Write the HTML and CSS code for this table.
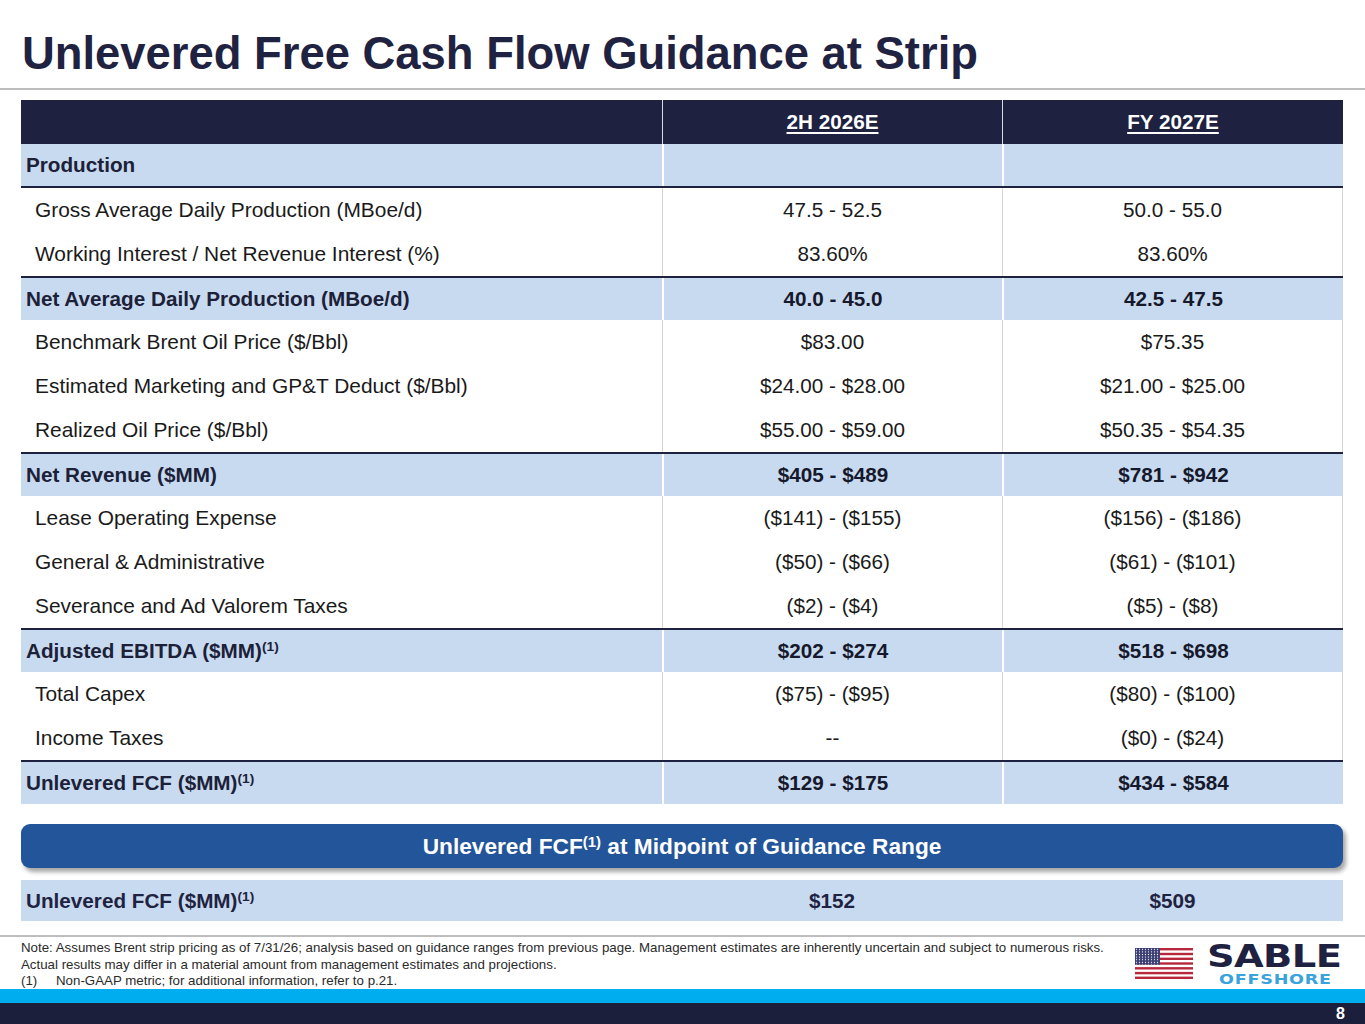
FILE: index.html
```html
<!DOCTYPE html>
<html lang="en">
<head>
<meta charset="utf-8">
<title>Unlevered Free Cash Flow Guidance at Strip</title>
<link rel="stylesheet" href="styles.css">
</head>
<body>
<h1 class="title">Unlevered Free Cash Flow Guidance at Strip</h1>
<div class="rule"></div>

<div class="table">
  <div class="row head">
    <div class="cell label"></div>
    <div class="cell val"><span class="u">2H 2026E</span></div>
    <div class="cell val"><span class="u">FY 2027E</span></div>
  </div>
  <div class="row sub first">
    <div class="cell label"><span>Production</span></div>
    <div class="cell val"></div>
    <div class="cell val"></div>
  </div>
  <div class="row plain">
    <div class="cell label"><span>Gross Average Daily Production (MBoe/d)</span></div>
    <div class="cell val">47.5 - 52.5</div>
    <div class="cell val">50.0 - 55.0</div>
  </div>
  <div class="row plain">
    <div class="cell label"><span>Working Interest / Net Revenue Interest (%)</span></div>
    <div class="cell val">83.60%</div>
    <div class="cell val">83.60%</div>
  </div>
  <div class="row sub">
    <div class="cell label"><span>Net Average Daily Production (MBoe/d)</span></div>
    <div class="cell val">40.0 - 45.0</div>
    <div class="cell val">42.5 - 47.5</div>
  </div>
  <div class="row plain">
    <div class="cell label"><span>Benchmark Brent Oil Price ($/Bbl)</span></div>
    <div class="cell val">$83.00</div>
    <div class="cell val">$75.35</div>
  </div>
  <div class="row plain">
    <div class="cell label"><span>Estimated Marketing and GP&amp;T Deduct ($/Bbl)</span></div>
    <div class="cell val">$24.00 - $28.00</div>
    <div class="cell val">$21.00 - $25.00</div>
  </div>
  <div class="row plain">
    <div class="cell label"><span>Realized Oil Price ($/Bbl)</span></div>
    <div class="cell val">$55.00 - $59.00</div>
    <div class="cell val">$50.35 - $54.35</div>
  </div>
  <div class="row sub">
    <div class="cell label"><span>Net Revenue ($MM)</span></div>
    <div class="cell val">$405 - $489</div>
    <div class="cell val">$781 - $942</div>
  </div>
  <div class="row plain">
    <div class="cell label"><span>Lease Operating Expense</span></div>
    <div class="cell val">($141) - ($155)</div>
    <div class="cell val">($156) - ($186)</div>
  </div>
  <div class="row plain">
    <div class="cell label"><span>General &amp; Administrative</span></div>
    <div class="cell val">($50) - ($66)</div>
    <div class="cell val">($61) - ($101)</div>
  </div>
  <div class="row plain">
    <div class="cell label"><span>Severance and Ad Valorem Taxes</span></div>
    <div class="cell val">($2) - ($4)</div>
    <div class="cell val">($5) - ($8)</div>
  </div>
  <div class="row sub">
    <div class="cell label"><span>Adjusted EBITDA ($MM)<sup class="sup">(1)</sup></span></div>
    <div class="cell val">$202 - $274</div>
    <div class="cell val">$518 - $698</div>
  </div>
  <div class="row plain">
    <div class="cell label"><span>Total Capex</span></div>
    <div class="cell val">($75) - ($95)</div>
    <div class="cell val">($80) - ($100)</div>
  </div>
  <div class="row plain">
    <div class="cell label"><span>Income Taxes</span></div>
    <div class="cell val">--</div>
    <div class="cell val">($0) - ($24)</div>
  </div>
  <div class="row sub">
    <div class="cell label"><span>Unlevered FCF ($MM)<sup class="sup">(1)</sup></span></div>
    <div class="cell val">$129 - $175</div>
    <div class="cell val">$434 - $584</div>
  </div>
</div>

<div class="banner"><span>Unlevered FCF<sup class="sup">(1)</sup> at Midpoint of Guidance Range</span></div>

<div class="mid">
  <div class="cell label"><span>Unlevered FCF ($MM)<sup class="sup">(1)</sup></span></div>
  <div class="cell val">$152</div>
  <div class="cell val">$509</div>
</div>

<div class="rule rule-foot"></div>

<div class="footer">
  <div class="notes">
    <p class="note">Note: Assumes Brent strip pricing as of 7/31/26; analysis based on guidance ranges from previous page. Management estimates are inherently uncertain and subject to numerous risks.<br>Actual results may differ in a material amount from management estimates and projections.</p>
    <p class="note fn"><span class="fn-num">(1)</span><span>Non-GAAP metric; for additional information, refer to p.21.</span></p>
  </div>
  <div class="logo">
    <svg class="flag" width="58" height="31" viewBox="0 0 58 31" aria-hidden="true">
      <defs>
        <pattern id="stars" x="0" y="0" width="3" height="2.6" patternUnits="userSpaceOnUse">
          <circle cx="1.5" cy="1.3" r="0.6" fill="#ffffff"/>
        </pattern>
      </defs>
      <rect x="0" y="0" width="58" height="31" fill="#ffffff"/>
      <rect x="0" y="0" width="58" height="2.4" fill="#b8283c"/>
      <rect x="0" y="4.8" width="58" height="2.4" fill="#b8283c"/>
      <rect x="0" y="9.6" width="58" height="2.4" fill="#b8283c"/>
      <rect x="0" y="14.3" width="58" height="2.4" fill="#b8283c"/>
      <rect x="0" y="19.1" width="58" height="2.4" fill="#b8283c"/>
      <rect x="0" y="23.9" width="58" height="2.4" fill="#b8283c"/>
      <rect x="0" y="28.6" width="58" height="2.4" fill="#b8283c"/>
      <rect x="0" y="0" width="25" height="16.7" fill="#3b3f73"/>
      <rect x="0" y="0" width="25" height="16.7" fill="url(#stars)"/>
    </svg>
    <div class="brand">
      <span class="brand-main">SABLE</span>
      <span class="brand-sub">OFFSHORE</span>
    </div>
  </div>
</div>

<div class="bar-cyan"></div>
<div class="bar-navy"><span class="page">8</span></div>
</body>
</html>
```

FILE: styles.css
```css
* { box-sizing: border-box; }

html, body {
  margin: 0;
  padding: 0;
}

body {
  width: 1365px;
  height: 1024px;
  overflow: hidden;
  background: #ffffff;
  color: #1a1a1a;
  font-family: "Liberation Sans", Arial, sans-serif;
}

.title {
  margin: 0;
  height: 88px;
  padding: 28px 0 0 22px;
  font-size: 45.4px;
  line-height: 52px;
  font-weight: 700;
  color: #1f2341;
}

.rule {
  height: 2px;
  background: #bdbdbd;
}

.table {
  margin: 10px 0 0 21px;
  width: 1322px;
}

.row {
  display: grid;
  grid-template-columns: 641px 340px 341px;
  height: 44px;
}

.cell {
  display: flex;
  align-items: center;
  font-size: 20.7px;
  white-space: nowrap;
}

.cell.label { padding-left: 14px; font-size: 20.9px; }
.cell.val { justify-content: center; }

.row.head {
  background: #1e2140;
  color: #ffffff;
  font-weight: 700;
}
.row.head .val { border-left: 1px solid #d9dbe3; }
.u {
  text-decoration: underline;
  text-decoration-thickness: 2px;
  text-underline-offset: 3px;
}

.row.plain .val { border-left: 1px solid #d6d6d6; }
.row.plain .val:last-child { border-right: 1px solid #d6d6d6; }

.row.sub {
  background: #c8daf0;
  font-weight: 700;
  color: #16182b;
  border-top: 2px solid #1e2140;
}
.row.sub.first {
  border-top: 0;
  border-bottom: 2px solid #1e2140;
}
.row.sub .label {
  padding-left: 5px;
  color: #1c2138;
  font-size: 20.7px;
}
.row.sub .val { border-left: 2px solid #ffffff; }

.sup {
  font-size: 0.66em;
  line-height: 0;
  vertical-align: 0.5em;
}

.banner {
  margin: 20px 0 0 21px;
  width: 1322px;
  height: 44px;
  border-radius: 9px;
  background: #23559a;
  color: #ffffff;
  font-size: 22.7px;
  font-weight: 700;
  display: flex;
  align-items: center;
  justify-content: center;
  box-shadow: 3px 4px 4px rgba(0, 0, 0, 0.35);
}

.mid {
  margin: 12px 0 0 21px;
  width: 1322px;
  height: 41px;
  display: grid;
  grid-template-columns: 641px 340px 341px;
  background: #c8daf0;
  font-weight: 700;
  color: #1f2341;
}
.mid .label { padding-left: 5px; font-size: 20.7px; }

.rule-foot { margin-top: 14px; }

.footer {
  height: 52px;
  display: flex;
  justify-content: space-between;
}

.notes {
  padding: 3px 0 0 21px;
  font-size: 13.3px;
  line-height: 16.5px;
  color: #2a2a2a;
  white-space: nowrap;
}
.note { margin: 0; }
.fn { display: flex; }
.fn-num { width: 35px; flex: none; }

.logo {
  display: flex;
  align-items: flex-start;
  gap: 12px;
  margin-right: 22px;
}
.flag {
  margin-top: 11px;
  display: block;
}
.brand {
  width: 138px;
  display: flex;
  flex-direction: column;
  align-items: center;
  padding-top: 8px;
}
.brand-main {
  display: block;
  font-family: "DejaVu Sans", sans-serif;
  font-weight: 700;
  font-size: 31.5px;
  line-height: 23px;
  height: 23px;
  color: #1e2140;
  transform: scaleX(1.22);
  letter-spacing: -0.5px;
}
.brand-sub {
  display: block;
  margin-top: 6px;
  font-family: "DejaVu Sans", sans-serif;
  font-weight: 700;
  font-size: 13.5px;
  line-height: 10px;
  height: 10px;
  letter-spacing: 0.6px;
  color: #3aa2dc;
  transform: scaleX(1.3);
  margin-left: 3px;
}

.bar-cyan {
  height: 14px;
  background: #00adee;
}
.bar-navy {
  height: 21px;
  background: #1c1f3b;
  display: flex;
  justify-content: flex-end;
  align-items: center;
  padding-right: 20px;
}
.page {
  color: #ffffff;
  font-weight: 700;
  font-size: 16px;
}
```
